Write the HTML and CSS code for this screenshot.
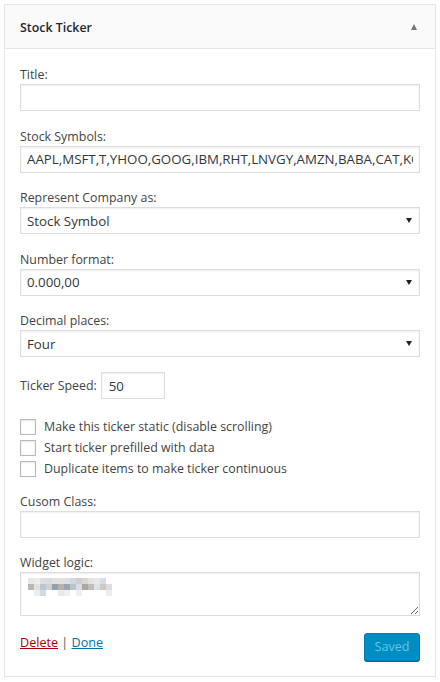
FILE: index.html
```html
<!DOCTYPE html>
<html>
<head>
<meta charset="utf-8">
<link rel="stylesheet" href="styles.css">
</head>
<body>
<div class="widget">
  <div class="widget-top">
    <h3 class="widget-title">Stock Ticker</h3>
    <span class="toggle-arrow"></span>
  </div>
  <div class="widget-inside">
    <div class="field">
      <label class="field-label">Title:</label>
      <input class="text-input" type="text" value="">
    </div>
    <div class="field">
      <label class="field-label">Stock Symbols:</label>
      <input class="text-input" type="text" value="AAPL,MSFT,T,YHOO,GOOG,IBM,RHT,LNVGY,AMZN,BABA,CAT,KO,FB">
    </div>
    <div class="field">
      <label class="field-label">Represent Company as:</label>
      <div class="select-wrap"><select class="select-input"><option>Stock Symbol</option></select></div>
    </div>
    <div class="field">
      <label class="field-label">Number format:</label>
      <div class="select-wrap"><select class="select-input"><option>0.000,00</option></select></div>
    </div>
    <div class="field">
      <label class="field-label">Decimal places:</label>
      <div class="select-wrap"><select class="select-input"><option>Four</option></select></div>
    </div>
    <div class="speed-row">
      <label class="inline-label">Ticker Speed:</label>
      <input class="speed-input" type="text" value="50">
    </div>
    <div class="checks">
      <label class="check-row"><span class="checkbox"></span><span>Make this ticker static (disable scrolling)</span></label>
      <label class="check-row"><span class="checkbox"></span><span>Start ticker prefilled with data</span></label>
      <label class="check-row"><span class="checkbox"></span><span>Duplicate items to make ticker continuous</span></label>
    </div>
    <div class="field field-class">
      <label class="field-label">Cusom Class:</label>
      <input class="text-input" type="text" value="">
    </div>
    <div class="field field-logic">
      <label class="field-label">Widget logic:</label>
      <div class="textarea-wrap">
        <textarea class="logic-input"></textarea>
        <svg class="mosaic" width="84" height="19" viewBox="0 0 84 19" aria-hidden="true">
          <rect x="0" y="0" width="6" height="6" fill="#e5e8eb"/>
          <rect x="6" y="0" width="6" height="6" fill="#ebeef1"/>
          <rect x="12" y="0" width="6" height="6" fill="#dcdfe2"/>
          <rect x="18" y="0" width="6" height="6" fill="#d8dde2"/>
          <rect x="24" y="0" width="6" height="6" fill="#dfe1e3"/>
          <rect x="30" y="0" width="6" height="6" fill="#e3e0dd"/>
          <rect x="36" y="0" width="6" height="6" fill="#d9e0e7"/>
          <rect x="42" y="0" width="6" height="6" fill="#cdd9e4"/>
          <rect x="48" y="0" width="6" height="6" fill="#d2cdc8"/>
          <rect x="54" y="0" width="6" height="6" fill="#dbd8d3"/>
          <rect x="60" y="0" width="6" height="6" fill="#e4e2de"/>
          <rect x="66" y="0" width="6" height="6" fill="#e6e9ec"/>
          <rect x="72" y="0" width="6" height="6" fill="#d5dde7"/>
          <rect x="0" y="6" width="6" height="6" fill="#bcb7b2"/>
          <rect x="6" y="6" width="6" height="6" fill="#e4e0dc"/>
          <rect x="12" y="6" width="6" height="6" fill="#b6c7d6"/>
          <rect x="18" y="6" width="6" height="6" fill="#d2cfcc"/>
          <rect x="24" y="6" width="6" height="6" fill="#8ea1b0"/>
          <rect x="30" y="6" width="6" height="6" fill="#b4b3af"/>
          <rect x="36" y="6" width="6" height="6" fill="#9ca5ac"/>
          <rect x="42" y="6" width="6" height="6" fill="#bdc2c6"/>
          <rect x="48" y="6" width="6" height="6" fill="#d7dee7"/>
          <rect x="54" y="6" width="6" height="6" fill="#ada8a4"/>
          <rect x="60" y="6" width="6" height="6" fill="#c1bcb7"/>
          <rect x="66" y="6" width="6" height="6" fill="#dce1e6"/>
          <rect x="72" y="6" width="6" height="6" fill="#cdc8c5"/>
          <rect x="78" y="6" width="6" height="6" fill="#dedede"/>
          <rect x="6" y="12" width="6" height="6" fill="#ebeef1"/>
          <rect x="12" y="12" width="6" height="6" fill="#cfdae5"/>
          <rect x="30" y="12" width="6" height="6" fill="#ece9e4"/>
          <rect x="36" y="12" width="6" height="6" fill="#eef1f4"/>
          <rect x="48" y="12" width="6" height="6" fill="#eef1f4"/>
          <rect x="78" y="12" width="6" height="6" fill="#ececec"/>
        </svg>
      </div>
    </div>
    <div class="widget-footer">
      <div class="footer-links"><a class="link-delete" href="#">Delete</a><span class="sep"> | </span><a class="link-done" href="#">Done</a></div>
      <button class="save-btn" type="button" disabled>Saved</button>
    </div>
  </div>
</div>
</body>
</html>
```
FILE: styles.css
```css
* { box-sizing: border-box; }
html, body { margin: 0; padding: 0; background: #fff; }
body {
  font-family: "Open Sans", "Noto Sans", sans-serif;
  font-size: 12.4px;
  color: #444;
}
.widget {
  margin: 4px;
  width: 432px;
  border: 1px solid #e5e5e5;
  background: #fff;
}
.widget-top {
  height: 44px;
  background: #fafafa;
  border-bottom: 1px solid #e5e5e5;
  display: flex;
  align-items: center;
  justify-content: space-between;
  padding: 1px 15px 0;
}
.widget-title {
  margin: 0;
  font-size: 12.4px;
  font-weight: 600;
  color: #23282d;
}
.toggle-arrow {
  width: 0; height: 0;
  border-left: 3.5px solid transparent;
  border-right: 3.5px solid transparent;
  border-bottom: 6px solid #72777c;
  margin-right: 3px;
}
.widget-inside {
  padding: 17px 15px 15px;
}
.field { margin-bottom: 16.5px; }
.field-label {
  display: block;
  line-height: 18px;
  color: #444;
}
.text-input, .select-input, .speed-input, .logic-input {
  display: block;
  width: 100%;
  height: 27px;
  border: 1px solid #ddd;
  box-shadow: inset 0 1px 2px rgba(0,0,0,.07);
  background: #fff;
  color: #32373c;
  font-family: "Open Sans", "Noto Sans", sans-serif;
  font-size: 13.3px;
  padding: 0 6px;
  margin: 0;
  border-radius: 0;
  outline: none;
}
.select-wrap { position: relative; }
.select-input {
  appearance: none;
  -webkit-appearance: none;
  padding: 0 24px 0 6px;
}
.select-wrap::after {
  content: "";
  position: absolute;
  right: 8px;
  top: 11px;
  width: 0; height: 0;
  border-left: 3px solid transparent;
  border-right: 3px solid transparent;
  border-top: 5px solid #222;
  pointer-events: none;
}
.field:nth-child(5) { margin-bottom: 15px; }
.speed-row {
  display: flex;
  align-items: center;
  gap: 4px;
}
.speed-input {
  width: 64px;
  padding: 0 7px;
}
.checks {
  margin-top: 17px;
  display: flex;
  flex-direction: column;
}
.check-row {
  display: flex;
  align-items: center;
  height: 21px;
  gap: 8px;
}
.checkbox {
  width: 16px; height: 16px;
  border: 1px solid #b4b9be;
  background: #fff;
  box-shadow: inset 0 1px 2px rgba(0,0,0,.1);
  flex: none;
}
.field-class { margin-top: 14px; margin-bottom: 16px; }
.field-logic { margin-bottom: 17px; }
.textarea-wrap { position: relative; }
.logic-input {
  height: 44px;
  resize: vertical;
  padding: 6px;
}
.mosaic {
  position: absolute;
  left: 8px;
  top: 6px;
}
.widget-footer {
  display: flex;
  justify-content: space-between;
  align-items: flex-start;
}
.footer-links { line-height: 18px; padding-top: 1px; font-size: 12.6px; }
.link-delete { color: #a00; text-decoration: underline; }
.link-done { color: #0073aa; text-decoration: underline; }
.sep { color: #555; }
.save-btn {
  height: 28px;
  width: 56px;
  padding: 0;
  border: 1px solid #007cb2;
  border-radius: 3px;
  background: #008ec2;
  color: #66c6e4;
  font-family: "Open Sans", "Noto Sans", sans-serif;
  font-size: 12.6px;
  line-height: 26px;
  box-shadow: 0 1px 0 #006799;
}
```
